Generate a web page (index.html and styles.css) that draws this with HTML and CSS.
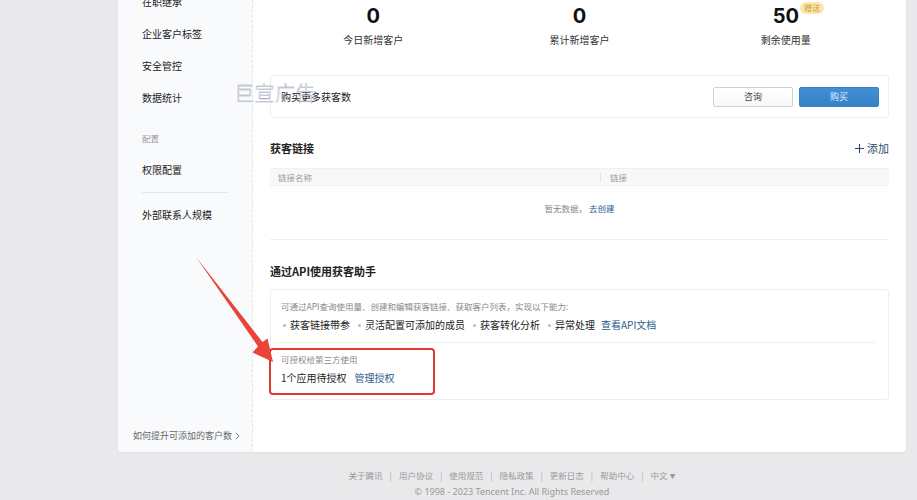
FILE: index.html
```html
<!DOCTYPE html>
<html lang="zh-CN">
<head>
<meta charset="utf-8">
<title>获客助手</title>
<link rel="stylesheet" href="styles.css">
</head>
<body>
<div class="page">
  <div class="card">
    <aside class="side">
      <div class="nav-item">在职继承</div>
      <div class="nav-item">企业客户标签</div>
      <div class="nav-item">安全管控</div>
      <div class="nav-item">数据统计</div>
      <div class="nav-group">配置</div>
      <div class="nav-item">权限配置</div>
      <div class="nav-divider"></div>
      <div class="nav-item">外部联系人规模</div>
      <div class="side-foot"><span>如何提升可添加的客户数</span><svg class="chev" width="5" height="8" viewBox="0 0 5 8"><path d="M0.8 0.8 L4 4 L0.8 7.2" fill="none" stroke="#777" stroke-width="1"/></svg></div>
    </aside>
    <main class="main">
      <div class="stats">
        <div class="stat"><div class="num">0</div><div class="stat-label">今日新增客户</div></div>
        <div class="stat"><div class="num">0</div><div class="stat-label">累计新增客户</div></div>
        <div class="stat"><div class="num">50<span class="badge">赠送</span></div><div class="stat-label">剩余使用量</div></div>
      </div>
      <div class="buy-box">
        <span class="buy-text">购买更多获客数</span>
        <div class="buy-actions">
          <button class="btn btn-default">咨询</button>
          <button class="btn btn-primary">购买</button>
        </div>
      </div>
      <div class="sec-head">
        <h3 class="sec-title">获客链接</h3>
        <a class="add"><svg width="9" height="9" viewBox="0 0 9 9"><path d="M4.5 0 V9 M0 4.5 H9" stroke="#2d4a6b" stroke-width="1.1"/></svg>添加</a>
      </div>
      <div class="table">
        <div class="thead">
          <div class="th th-name">链接名称</div>
          <div class="th th-link">链接</div>
        </div>
        <div class="empty">暂无数据，<a class="link">去创建</a></div>
      </div>
      <h3 class="sec-title api-title">通过API使用获客助手</h3>
      <div class="api-box">
        <p class="api-desc">可通过API查询使用量、创建和编辑获客链接、获取客户列表，实现以下能力:</p>
        <div class="api-feats">
          <span class="feat">获客链接带参</span>
          <span class="feat">灵活配置可添加的成员</span>
          <span class="feat">获客转化分析</span>
          <span class="feat">异常处理</span>
          <a class="link">查看API文档</a>
        </div>
        <div class="api-divider"></div>
        <p class="auth-label">可授权给第三方使用</p>
        <div class="auth-row">1个应用待授权<a class="link">管理授权</a></div>
        <div class="highlight"></div>
      </div>
    </main>
    <div class="watermark">巨宣广告</div>
  </div>
  <footer class="footer">
    <div class="foot-links">
      <a>关于腾讯</a><span class="sep">|</span><a>用户协议</a><span class="sep">|</span><a>使用规范</a><span class="sep">|</span><a>隐私政策</a><span class="sep">|</span><a>更新日志</a><span class="sep">|</span><a>帮助中心</a><span class="sep">|</span><a>中文 <span class="caret">▼</span></a>
    </div>
    <div class="copy">© 1998 - 2023 Tencent Inc. All Rights Reserved</div>
  </footer>
  <svg class="arrow" width="917" height="500" viewBox="0 0 917 500">
    <polygon points="196,257 262.5,342 267.5,338.5 273,362 252.5,352.5 258,346.5" fill="#e8443a"/>
  </svg>
</div>
</body>
</html>
```

FILE: styles.css
```css
* { box-sizing: border-box; }
html, body { margin: 0; padding: 0; }
body {
  background: #e9e9eb;
  font-family: "Noto Sans CJK SC", "Noto Sans", sans-serif;
  color: #333;
  height: 500px;
  overflow: hidden;
}
.page {
  position: relative;
  display: flow-root;
  padding: 0 11px 0 118px;
}
.card {
  position: relative;
  margin-top: -40px;
  background: #fff;
  border-radius: 0 0 4px 4px;
  display: flex;
  height: 492px;
  box-shadow: 0 1px 2px rgba(0,0,0,0.04);
}
.side {
  width: 135px;
  flex: none;
  background: #f9fafc;
  border-right: 1px dashed #e4e6ea;
  border-radius: 0 0 0 4px;
  padding: 26px 24px 8px 24px;
  display: flex;
  flex-direction: column;
}
.nav-item {
  font-size: 10px;
  line-height: 32px;
  height: 32px;
  color: #222;
  white-space: nowrap;
}
.nav-group {
  margin-top: 16px;
  font-size: 8.5px;
  line-height: 16px;
  color: #999;
  margin-bottom: 8px;
}
.nav-divider {
  height: 1px;
  background: #e5e6ea;
  margin: 6px 0 6px 0;
}
.side-foot {
  margin-top: auto;
  margin-left: -9px;
  margin-right: -20px;
  font-size: 9px;
  line-height: 16px;
  color: #666;
  white-space: nowrap;
  display: flex;
  align-items: center;
  gap: 3px;
}
.chev { flex: none; }
.main {
  flex: 1;
  padding: 44px 17px 51px 17px;
  min-width: 0;
}
.stats {
  display: grid;
  grid-template-columns: 1fr 1fr 1fr;
}
.stat { text-align: center; }
.num {
  position: relative;
  display: inline-block;
  font-family: Inter, "Liberation Sans", sans-serif;
  font-weight: 700;
  font-size: 20px;
  line-height: 24px;
  color: #111;
}
.badge {
  position: absolute;
  left: 100%;
  top: -2px;
  margin-left: 1px;
  background: #fde7ad;
  color: #c9a24a;
  font-family: "Noto Sans CJK SC", sans-serif;
  font-weight: 400;
  font-size: 8px;
  line-height: 12px;
  padding: 0 4px;
  border-radius: 6px;
  white-space: nowrap;
}
.stat-label {
  margin-top: 4px;
  font-size: 10px;
  line-height: 16px;
  color: #333;
}
.buy-box {
  margin-top: 27px;
  height: 43px;
  border: 1px solid #eceef0;
  border-radius: 3px;
  display: flex;
  align-items: center;
  justify-content: space-between;
  padding: 0 9px 0 10px;
}
.buy-text { font-size: 10px; color: #222; }
.buy-actions { display: flex; gap: 6px; }
.btn {
  width: 80px;
  height: 20px;
  font-family: "Noto Sans CJK SC", sans-serif;
  font-size: 9px;
  border-radius: 2px;
  padding: 0;
  line-height: 18px;
}
.btn-default {
  background: linear-gradient(#fff, #f7f7f7);
  border: 1px solid #cfd1d4;
  color: #444;
}
.btn-primary {
  background: linear-gradient(#4190d6, #3680c8);
  border: 1px solid #3a7fc2;
  color: #e6f0fa;
}
.sec-head {
  margin-top: 20px;
  display: flex;
  justify-content: space-between;
  align-items: center;
  height: 20px;
}
.sec-title {
  margin: 0;
  font-size: 11px;
  font-weight: 700;
  line-height: 20px;
  color: #222;
}
.add {
  display: flex;
  align-items: center;
  gap: 3px;
  font-size: 11px;
  color: #2d4a6b;
}
.table { margin-top: 10px; }
.thead {
  display: flex;
  height: 18px;
  align-items: center;
  background: #f7f8fa;
  border-top: 1px solid #eef0f3;
  border-bottom: 1px solid #eef0f3;
}
.th {
  font-size: 8.5px;
  color: #999;
  line-height: 16px;
}
.th-name { width: 331px; padding-left: 8px; border-right: 1px solid #e2e4e8; line-height: 10px; }
.th-link { padding-left: 9px; }
.empty {
  height: 54px;
  padding-top: 14px;
  text-align: center;
  font-size: 8.5px;
  line-height: 16px;
  color: #888;
  border-bottom: 1px solid #eef0f2;
}
.link { color: #2b5a8c; }
.empty .link { margin-left: 2px; }
.api-title { margin-top: 21px; }
.api-box {
  position: relative;
  margin-top: 8px;
  border: 1px solid #eceef0;
  border-radius: 3px;
  padding: 8px 13px 12px 10px;
}
.api-desc {
  margin: 0;
  font-size: 8.5px;
  line-height: 16px;
  color: #888;
}
.api-feats {
  margin-top: 2px;
  display: flex;
  align-items: center;
  font-size: 10px;
  line-height: 18px;
  color: #222;
}
.feat {
  display: flex;
  align-items: center;
  margin-right: 6px;
}
.feat::before {
  content: "";
  width: 3px;
  height: 3px;
  border-radius: 50%;
  background: #bbb;
  margin: 0 4px 0 2px;
}
.api-divider {
  height: 1px;
  background: #eceef0;
  margin-top: 8px;
}
.auth-label {
  margin: 9px 0 0 0;
  font-size: 8.5px;
  line-height: 14px;
  color: #888;
}
.auth-row {
  margin-top: 3px;
  font-size: 10px;
  line-height: 18px;
  color: #222;
}
.auth-row .link { margin-left: 8px; }
.highlight {
  position: absolute;
  left: -2px;
  top: 58px;
  width: 166px;
  height: 47px;
  border: 2px solid #e2382e;
  border-radius: 4px;
}
.watermark {
  position: absolute;
  left: 116px;
  top: 121px;
  font-size: 20px;
  line-height: 24px;
  font-weight: 300;
  color: rgba(250,251,253,0.6);
  -webkit-text-stroke: 0.4px #9aa5ba;
  letter-spacing: 0.5px;
  white-space: nowrap;
}
.footer {
  text-align: center;
  padding-top: 15px;
  color: #999;
  font-size: 8.5px;
  line-height: 16px;
}
.foot-links a { color: #999; }
.sep { margin: 0 7px; color: #aaa; }
.caret { font-size: 6px; vertical-align: 1px; }
.copy {
  font-family: "Noto Sans", "Liberation Sans", sans-serif;
  font-size: 9px;
  color: #999;
}
.arrow {
  position: absolute;
  left: 0;
  top: 0;
  pointer-events: none;
}
```
